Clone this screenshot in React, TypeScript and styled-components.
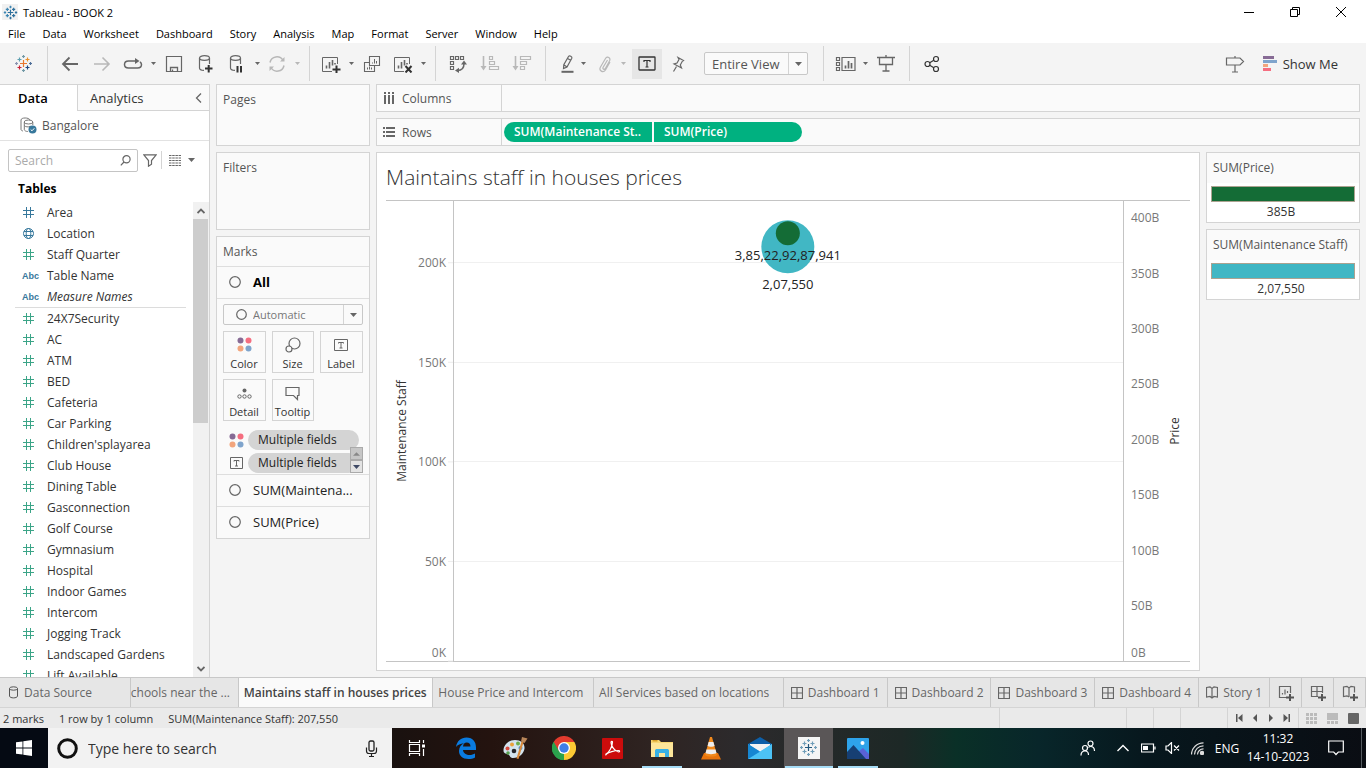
import React from "react";
import styled, { createGlobalStyle, css } from "styled-components";

const c = {
  chrome: "#f4f4f4",
  card: "#fafafa",
  line: "#d4d4d4",
  text: "#333333",
  soft: "#555555",
  icon: "#666666",
  dim: "#b8b8b8",
  dimension: "#37789c",
  measure: "#3ba487",
  pill: "#00b180",
  teal: "#41b7c4",
  green: "#146c36",
};

const GlobalStyle = createGlobalStyle`
  * { box-sizing: border-box; }
  html, body { margin: 0; height: 100%; }
  body, button, input, select {
    font-family: "Open Sans", "Liberation Sans", sans-serif;
    font-size: 12px;
    color: ${c.text};
  }
  button { background: none; border: 0; padding: 0; }
  ul { list-style: none; margin: 0; padding: 0; }
  h1, h2, h3, p { margin: 0; font-size: 12px; font-weight: 400; }
  svg { display: block; flex: none; }
`;

const Page = styled.div`
  display: flex;
  flex-direction: column;
  height: 100vh;
  overflow: hidden;
  background: ${c.chrome};
  white-space: nowrap;
`;

/* ---------- window chrome ---------- */

const TitleBar = styled.header`
  display: flex;
  align-items: center;
  flex: none;
  height: 24px;
  padding: 0 2px;
  background: #fff;
  h1 { flex: 1; padding-left: 5px; font-size: 11px; color: #000; }
`;

const AppBadge = styled.span`
  display: grid;
  place-items: center;
  width: 16px;
  height: 16px;
  background: #f1f1f1;
`;

const WindowButton = styled.button`
  display: grid;
  place-items: center;
  width: 46px;
  height: 22px;
`;

const MenuBar = styled.nav`
  display: flex;
  align-items: center;
  flex: none;
  height: 19px;
  background: #fff;
  button { padding: 0 9px 0 8px; font-size: 11px; color: #000; }
`;

const Toolbar = styled.div`
  display: flex;
  align-items: center;
  flex: none;
  height: 41px;
`;

const ToolGroup = styled.div`
  display: flex;
  align-items: center;
  height: 35px;
  padding: 0 7px 0 6px;
  border-left: 1px solid ${c.line};
`;

const FormatGroup = styled(ToolGroup)`
  gap: 4px;
  padding: 0 15px 0 10px;
`;

const Tool = styled.button<{ $w?: number; $on?: boolean }>`
  display: grid;
  place-items: center;
  width: ${(p) => p.$w ?? 32}px;
  height: 30px;
  background: ${(p) => (p.$on ? "#e6e6e6" : "transparent")};
`;

const Split = styled.div`
  display: flex;
  align-items: center;
`;

const Spacer = styled.div`
  flex: 1;
`;

const SelectBox = styled.div<{ $h: number; $w?: number; $icon?: boolean }>`
  display: grid;
  grid-template-columns: 1fr 19px;
  align-items: center;
  height: ${(p) => p.$h}px;
  width: ${(p) => (p.$w ? `${p.$w}px` : "auto")};
  border: 1px solid #c8c8c8;
  border-radius: 2px;
  background: ${c.card};
  select {
    grid-area: 1 / 1 / 2 / 3;
    width: 100%;
    height: 100%;
    appearance: none;
    border: 0;
    background: transparent;
    padding: 0 20px 0 ${(p) => (p.$icon ? 29 : 7)}px;
    color: ${(p) => (p.$icon ? "#777" : c.soft)};
    font-size: ${(p) => (p.$icon ? 11 : 13)}px;
  }
  > span {
    grid-area: 1 / 2;
    display: grid;
    place-items: center;
    height: 100%;
    border-left: 1px solid ${c.line};
    pointer-events: none;
  }
  > svg { grid-area: 1 / 1; margin-left: 12px; pointer-events: none; }
`;

const ViewSelect = styled(SelectBox)`
  margin-left: 10px;
`;

const ShowMe = styled.button`
  display: flex;
  align-items: center;
  gap: 6px;
  margin: 0 28px 0 12px;
  font-size: 13px;
`;

/* ---------- body ---------- */

const Body = styled.main`
  display: flex;
  flex: 1;
  min-height: 0;
`;

const DataPane = styled.aside`
  display: flex;
  flex-direction: column;
  flex: none;
  width: 210px;
  background: #fff;
  border-top: 1px solid ${c.line};
  border-right: 1px solid ${c.line};
`;

const PaneTabs = styled.div`
  display: flex;
  height: 26px;
`;

const PaneTab = styled.button<{ $active?: boolean }>`
  text-align: left;
  font-size: 13px;
  ${(p) =>
    p.$active
      ? css`
          width: 77px;
          padding-left: 18px;
          font-weight: 600;
          color: #000;
        `
      : css`
          flex: 1;
          padding-left: 12px;
          background: ${c.card};
          border-left: 1px solid ${c.line};
          border-bottom: 1px solid ${c.line};
        `}
`;

const Collapse = styled.button`
  display: grid;
  place-items: center;
  width: 22px;
  background: ${c.card};
  border-bottom: 1px solid ${c.line};
`;

const SourceRow = styled.div`
  display: flex;
  align-items: center;
  gap: 5px;
  height: 30px;
  padding-left: 20px;
  border-bottom: 1px solid #e2e2e2;
  color: ${c.soft};
`;

const SearchRow = styled.div`
  display: flex;
  align-items: center;
  height: 38px;
  padding-left: 8px;
`;

const SearchField = styled.label`
  display: flex;
  align-items: center;
  width: 130px;
  height: 23px;
  padding: 0 6px;
  border: 1px solid #c4c4c4;
  border-radius: 2px;
  input {
    flex: 1;
    min-width: 0;
    padding: 0;
    border: 0;
    outline: 0;
    background: none;
  }
  input::placeholder { color: #aaa; opacity: 1; }
`;

const SearchTool = styled.button`
  display: grid;
  place-items: center;
  width: 23px;
  height: 18px;
  & + & { border-left: 1px solid ${c.line}; width: 27px; }
`;

const TablesHeading = styled.h2`
  height: 23px;
  padding: 1px 0 0 18px;
  font-weight: 700;
  color: #000;
`;

const FieldArea = styled.div`
  display: flex;
  flex: 1;
  min-height: 0;
  overflow: hidden;
`;

const Fields = styled.div`
  flex: 1;
  overflow: hidden;
`;

const FieldList = styled.ul`
  & + & {
    margin: 0 7px 0 15px;
    border-top: 1px solid #dcdcdc;
  }
  & + & > li { padding-left: 7px; }
`;

const Field = styled.li<{ $italic?: boolean }>`
  display: flex;
  align-items: center;
  height: 21px;
  padding-left: 22px;
  gap: 12px;
  font-style: ${(p) => (p.$italic ? "italic" : "normal")};
`;

const FieldKind = styled.span<{ $measure?: boolean }>`
  display: grid;
  place-items: center;
  flex: none;
  width: 13px;
  font: 700 9px "Liberation Sans", sans-serif;
  color: ${(p) => (p.$measure ? c.measure : c.dimension)};
`;

const ScrollTrack = styled.div`
  display: flex;
  flex-direction: column;
  width: 16px;
  background: #f1f1f1;
  button { display: grid; place-items: center; height: 17px; }
`;

const ScrollThumb = styled.div`
  height: 43%;
  margin-right: 1px;
  background: #cdcdcd;
`;

const Cards = styled.aside`
  display: flex;
  flex-direction: column;
  flex: none;
  gap: 6px;
  width: 154px;
  margin-left: 6px;
`;

const Card = styled.section<{ $h?: number }>`
  flex: none;
  height: ${(p) => (p.$h ? `${p.$h}px` : "auto")};
  background: ${c.card};
  border: 1px solid ${c.line};
`;

const CardTitle = styled.h3`
  height: 30px;
  padding-left: 6px;
  line-height: 30px;
  color: ${c.soft};
`;

const MarksTitle = styled(CardTitle)`
  height: 29px;
`;

const MarkRow = styled.button<{ $strong?: boolean }>`
  display: flex;
  align-items: center;
  gap: 12px;
  width: 100%;
  height: 32px;
  padding: 0 0 2px 12px;
  border-top: 1px solid #dedede;
  font-size: 13px;
  font-weight: ${(p) => (p.$strong ? 700 : 400)};
  color: ${(p) => (p.$strong ? "#000" : "#222")};
`;

const MarkBody = styled.div`
  padding: 5px 6px 0;
  border-top: 1px solid #dedede;
`;

const MarkButtons = styled.div`
  display: grid;
  grid-template-columns: 43px 42px 43px;
  gap: 6px;
  margin-top: 6px;
`;

const MarkButton = styled.button`
  display: flex;
  flex-direction: column;
  align-items: center;
  justify-content: space-between;
  height: 42px;
  padding: 5px 1px 1px 0;
  border: 1px solid ${c.line};
  font-size: 11px;
`;

const MarkFields = styled.div`
  position: relative;
  display: grid;
  gap: 3px;
  padding: 9px 0 1px;
`;

const MarkField = styled.div`
  display: flex;
  align-items: center;
  height: 20px;
  padding-left: 6px;
  gap: 4px;
  button {
    width: 111px;
    height: 20px;
    padding: 0 0 1px 10px;
    border-radius: 10px;
    background: #d4d4d4;
    text-align: left;
    color: #222;
    font-weight: 500;
  }
`;

const Stepper = styled.div`
  position: absolute;
  right: 0;
  bottom: 1px;
  button {
    display: grid;
    place-items: center;
    width: 13px;
    height: 13px;
    border: 1px solid #aaa;
    background: #e3e3e3;
  }
  button:first-child { background: #c6c6c6; }
`;

const Sheet = styled.div`
  display: flex;
  flex-direction: column;
  flex: 1;
  min-width: 0;
  gap: 6px;
  padding: 0 6px 6px;
`;

const Shelf = styled.div`
  display: flex;
  align-items: center;
  flex: none;
  height: 28px;
  background: ${c.card};
  border: 1px solid ${c.line};
`;

const ShelfName = styled.div`
  display: flex;
  align-items: center;
  gap: 7px;
  width: 125px;
  height: 100%;
  padding-left: 6px;
  border-right: 1px solid ${c.line};
  color: ${c.soft};
`;

const Pills = styled.div`
  display: flex;
  gap: 2px;
  padding-left: 2px;
  button {
    width: 148px;
    height: 20px;
    padding: 0 0 1px 10px;
    text-align: left;
    background: ${c.pill};
    color: #fff;
    font-weight: 600;
  }
  button:first-child { border-radius: 10px 0 0 10px; }
  button:last-child { border-radius: 0 10px 10px 0; }
`;

const SheetBody = styled.div`
  display: flex;
  flex: 1;
  min-height: 0;
  gap: 6px;
`;

const View = styled.section`
  display: flex;
  flex-direction: column;
  flex: 1;
  padding: 0 9px 8px;
  background: #fff;
  border: 1px solid ${c.line};
  h2 {
    height: 47px;
    line-height: 49px;
    font-size: 21px;
    font-weight: 300;
    color: #333;
  }
`;

const Chart = styled.div`
  display: grid;
  grid-template-columns: 67px 1fr 66px;
  flex: 1;
  min-height: 0;
  border-top: 1px solid #c4c4c4;
  border-bottom: 1px solid #c4c4c4;
  svg { width: 100%; height: 100%; overflow: visible; }
  text { font-size: 12px; fill: #787878; dominant-baseline: central; }
  .axis { font-size: 12px; font-weight: 500; fill: #333; text-anchor: middle; }
  .mark { font-size: 13px; fill: #222; text-anchor: middle; }
`;

const Plot = styled.div`
  border-left: 1px solid #c4c4c4;
  border-right: 1px solid #c4c4c4;
`;

const Legends = styled.aside`
  display: flex;
  flex-direction: column;
  gap: 6px;
  width: 154px;
`;

const Ramp = styled.div<{ $fill: string }>`
  height: 16px;
  border: 1px solid #aca391;
  background: ${(p) => p.$fill};
`;

const LegendBody = styled.div`
  padding: 3px 4px 0;
  height: 39px;
  background: #fff;
  text-align: center;
  p { line-height: 19px; padding-right: 4px; }
`;

/* ---------- sheet tabs and status ---------- */

const SheetTabs = styled.nav`
  display: flex;
  flex: none;
  height: 31px;
  border-top: 1px solid #c8c8c8;
  border-bottom: 1px solid ${c.line};
  background: #e6e6e6;
`;

const SheetTab = styled.button<{ $w: number; $active?: boolean; $cut?: boolean; $icon?: boolean }>`
  display: flex;
  align-items: center;
  gap: ${(p) => (p.$icon ? 5 : 3)}px;
  flex: ${(p) => p.$w} 1 ${(p) => p.$w}px;
  min-width: 0;
  overflow: hidden;
  padding-left: ${(p) => (p.$cut ? 0 : p.$icon ? 7 : 5)}px;
  border-right: 1px solid #c8c8c8;
  background: ${(p) => (p.$active ? c.card : "transparent")};
  color: ${(p) => (p.$active ? "#444" : "#666")};
  font-weight: ${(p) => (p.$active ? 600 : 400)};
`;

const NewTab = styled.button`
  display: grid;
  place-items: center;
  flex: none;
  width: 32px;
  border-right: 1px solid #c8c8c8;
`;

const StatusBar = styled.footer`
  display: flex;
  align-items: center;
  flex: none;
  height: 20px;
  padding-left: 3px;
  background: #eaeaea;
  p { font-size: 11px; margin-right: 15px; }
`;

const StatusCell = styled.div<{ $w: number; $gap?: number }>`
  display: flex;
  align-items: center;
  justify-content: center;
  gap: ${(p) => p.$gap ?? 0}px;
  width: ${(p) => p.$w}px;
  height: 20px;
  border-left: 1px solid ${c.line};
`;

/* ---------- taskbar ---------- */

const Taskbar = styled.div`
  display: flex;
  flex: none;
  height: 40px;
  color: #fff;
  background: linear-gradient(90deg, #18110f 28%, #24130f 36%, #2f2422 48%, #2c2a2c 54%, #1d2826 66%, #0a3027 70%, #08262a 76%, #07171d 84%, #0a0d13 100%);
`;

const Start = styled.button`
  display: grid;
  place-items: center;
  width: 48px;
  background: #050a13;
`;

const TaskSearch = styled.label`
  display: flex;
  align-items: center;
  gap: 10px;
  width: 344px;
  padding: 0 12px 0 9px;
  background: #f2f2f2;
  input {
    flex: 1;
    border: 0;
    outline: 0;
    padding: 0;
    background: none;
    font-size: 14px;
  }
  input::placeholder { color: #333; opacity: 1; }
`;

const TaskApp = styled.button<{ $open?: boolean; $active?: boolean }>`
  display: grid;
  place-items: center;
  width: 49px;
  background: ${(p) =>
    p.$open || p.$active
      ? `linear-gradient(#a6dcf6, #a6dcf6) center bottom / ${p.$active ? 48 : 40}px 2px no-repeat${p.$active ? ", #5a5657" : ""}`
      : "none"};
`;

const Tray = styled.div`
  display: flex;
  align-items: center;
  button { display: grid; place-items: center; height: 40px; color: #fff; }
`;

const TrayButton = styled.button<{ $w: number }>`
  width: ${(p) => p.$w}px;
`;

const Clock = styled.div`
  width: 70px;
  line-height: 18px;
  text-align: center;
  font-size: 12px;
`;

const DesktopEdge = styled.div`
  width: 5px;
  height: 40px;
  border-left: 1px solid #555b60;
`;

/* ---------- icons ---------- */

type IcoProps = { w?: number; h?: number; color?: string; sw?: number; children: React.ReactNode };

const Ico = ({ w = 18, h = w, color = c.icon, sw = 1, children }: IcoProps) => (
  <svg width={w} height={h} viewBox={`0 0 ${w} ${h}`} fill="none" stroke={color} strokeWidth={sw} aria-hidden="true">
    {children}
  </svg>
);

const Caret = ({ color = c.icon, big = false }: { color?: string; big?: boolean }) => (
  <svg width={big ? 7 : 5} height={big ? 4 : 3} viewBox="0 0 8 4" preserveAspectRatio="none" aria-hidden="true">
    <path d="M0 0h8L4 4z" fill={color} />
  </svg>
);

/* centre x, centre y and arm length of each plus in the Tableau mark */
const pluses: [number, number, number][] = [
  [9.5, 9.5, 3.5],
  [5.5, 5.5, 2],
  [13.5, 5.5, 2],
  [5.5, 13.5, 2],
  [13.5, 13.5, 2],
  [9.5, 2.5, 1.5],
  [9.5, 16.5, 1.5],
  [2.5, 9.5, 1.5],
  [16.5, 9.5, 1.5],
];

const TableauMark = ({ size = 19, colors, sw = 1.2 }: { size?: number; colors: string[]; sw?: number }) => (
  <svg width={size} height={size} viewBox="0 0 19 19" fill="none" strokeWidth={sw} aria-hidden="true">
    {pluses.map(([x, y, r], i) => (
      <path key={i} d={`M${x - r} ${y}h${2 * r}M${x} ${y - r}v${2 * r}`} stroke={colors[i % colors.length]} />
    ))}
  </svg>
);

const brand = ["#e8762d", "#5c9fb0", "#eb912c", "#c72035", "#1f457e", "#7199a6", "#7199a6", "#8a93b0", "#4f6f99"];

const Bars = ({ children }: { children?: React.ReactNode }) => (
  <Ico w={20} h={18}>
    <path d="M11 16.5H1.5V2.5H16.5V9" />
    <path d="M5.500 13.500v-3M8.500 13.500V7M11.500 10.500V5M14 9.500V8" strokeWidth={1.600} />
    {children}
  </Ico>
);

const TBox = ({ size, color = c.icon }: { size: number; color?: string }) => (
  <svg width={size + 3} height={size} viewBox="0 0 18 15" fill="none" stroke={color} aria-hidden="true">
    <rect x="1" y="1" width="16" height="13" rx="0.5" strokeWidth="1.300" />
    <path d="M6 6V4.500h6V6M9 4.500v6.500M7.500 11h3" strokeWidth="1.200" />
  </svg>
);

const Hash = ({ color }: { color: string }) => (
  <Ico w={11} h={11} color={color} sw={1}>
    <path d="M3.500 0v11M7.500 0v11M0 3.500h11M0 7.500h11" />
  </Ico>
);

const Globe = () => (
  <Ico w={11} h={11} color={c.dimension}>
    <circle cx="5.500" cy="5.500" r="5" />
    <ellipse cx="5.500" cy="5.500" rx="2.300" ry="5" />
    <path d="M1 3.500h9M1 7.500h9" />
  </Ico>
);

const FourDots = () => (
  <svg width="15" height="15" viewBox="0 0 15 15" aria-hidden="true">
    <circle cx="3.500" cy="3.500" r="3" fill="#876b95" />
    <circle cx="11.500" cy="3.500" r="3" fill="#f56e80" />
    <circle cx="3.500" cy="11.500" r="3" fill="#f2a57d" />
    <circle cx="11.500" cy="11.500" r="3" fill="#7fa4cc" />
  </svg>
);

const Ring = ({ size = 12 }: { size?: number }) => (
  <Ico w={size} h={size}>
    <circle cx={size / 2} cy={size / 2} r={size / 2 - 0.7} strokeWidth={1.200} />
  </Ico>
);

const GridIcon = () => (
  <Ico w={12} h={12}>
    <path d="M0.500 0.500h11v11h-11zM6 0v12M0 6h12" strokeWidth={1.200} />
  </Ico>
);

const BookIcon = () => (
  <Ico w={12} h={13}>
    <path d="M0.500 1.500L4 0.800 6 2.500 8 0.800l3.500 0.700V11L8 10.500 6 12 4 10.500 0.500 11zM6 2.500V12" strokeWidth={1.200} />
  </Ico>
);

/* ---------- data ---------- */

const menus = ["File", "Data", "Worksheet", "Dashboard", "Story", "Analysis", "Map", "Format", "Server", "Window", "Help"];

const dimensions: { name: string; kind: "num" | "geo" | "abc" | "measure"; italic?: boolean }[] = [
  { name: "Area", kind: "num" },
  { name: "Location", kind: "geo" },
  { name: "Staff Quarter", kind: "measure" },
  { name: "Table Name", kind: "abc" },
  { name: "Measure Names", kind: "abc", italic: true },
];

const measures = [
  "24X7Security", "AC", "ATM", "BED", "Cafeteria", "Car Parking", "Children'splayarea", "Club House",
  "Dining Table", "Gasconnection", "Golf Course", "Gymnasium", "Hospital", "Indoor Games", "Intercom",
  "Jogging Track", "Landscaped Gardens", "Lift Available",
];

const STAFF_MAX = 231;
const PRICE_MAX = 415;
const staffTicks = [200, 150, 100, 50, 0];
const priceTicks = [400, 350, 300, 250, 200, 150, 100, 50, 0];
const at = (value: number, max: number) => `${(1 - value / max) * 100}%`;

/* ---------- sections ---------- */

const Drop = ({ color, label }: { color?: string; label: string }) => (
  <Tool $w={10} aria-label={label}>
    <Caret color={color} />
  </Tool>
);

const DataDrum = ({ children }: { children: React.ReactNode }) => (
  <Ico w={20} h={20}>
    <ellipse cx="8.500" cy="4" rx="5" ry="2.300" strokeWidth={1.200} />
    <path d="M3.500 4v10c0 1.300 2 2.300 4.500 2.400M13.500 4v6" strokeWidth={1.200} />
    {children}
  </Ico>
);

const MainToolbar = () => (
  <Toolbar>
    <Tool $w={47} aria-label="Start page"><TableauMark colors={brand} /></Tool>
    <ToolGroup>
      <Tool aria-label="Undo">
        <Ico w={18} sw={1.8}><path d="M17 9H2M8.500 2.500L2 9l6.500 6.500" /></Ico>
      </Tool>
      <Tool aria-label="Redo">
        <Ico w={18} sw={1.6} color={c.dim}><path d="M1 9h15M9.500 2.500L16 9l-6.500 6.500" /></Ico>
      </Tool>
      <Split>
        <Tool $w={30} aria-label="Replay">
          <Ico w={20} h={12}>
            <path d="M13 3H5.500C3 3 1.500 4.500 1.500 6.500S3 10 5.500 10h9c2.500 0 4-1.500 4-3.500 0-1-.5-2-1.500-2.700" strokeWidth={1.500} />
            <path d="M12 0l4.500 3L12 6z" fill={c.icon} stroke="none" />
          </Ico>
        </Tool>
        <Drop label="Replay options" />
      </Split>
      <Tool aria-label="Save">
        <Ico w={18}>
          <path d="M1.500 1.500h15v15h-15z" strokeWidth={1.200} />
          <path d="M5.500 16.500v-4h7v4M7.500 16v-1.500" strokeWidth={1.300} />
        </Ico>
      </Tool>
      <Tool aria-label="New data source">
        <DataDrum><path d="M9 14.500h7.500M12.700 11v7.500" stroke="#333" strokeWidth={2} /></DataDrum>
      </Tool>
      <Split>
        <Tool $w={30} aria-label="Pause auto updates">
          <DataDrum><path d="M10.500 12v6.500M14 12v6.500" stroke="#333" strokeWidth={2} /></DataDrum>
        </Tool>
        <Drop label="Update options" />
      </Split>
      <Split>
        <Tool $w={30} aria-label="Run update">
          <Ico w={18} color={c.dim} sw={1.5}>
            <path d="M2 7.500A7 7 0 0 1 15 5.500M16 10.500A7 7 0 0 1 3 12.500" />
            <path d="M16.500 2v4.500H12zM1.500 16v-4.500H6z" fill={c.dim} stroke="none" />
          </Ico>
        </Tool>
        <Drop color={c.dim} label="Run options" />
      </Split>
    </ToolGroup>
    <ToolGroup>
      <Split>
        <Tool $w={30} aria-label="New worksheet">
          <Bars><path d="M11.500 14.500h8M15.500 10.500v7.500" stroke="#333" strokeWidth={2} /></Bars>
        </Tool>
        <Drop label="New sheet options" />
      </Split>
      <Tool aria-label="Duplicate">
        <Ico w={18}>
          <path d="M6.500 1.500h10v9h-10zM6 7.500H1.500v9h10v-5.500" strokeWidth={1.100} />
          <path d="M9.500 8.500v-1M11.500 8.500V4M13.500 8.500V6M4.500 14.500v-2M6.500 14.500v-3M8.500 14.500v-2" />
        </Ico>
      </Tool>
      <Split>
        <Tool $w={30} aria-label="Clear sheet">
          <Bars><path d="M12.500 11l6 6.500M18.500 11l-6 6.500" stroke="#333" strokeWidth={2} /></Bars>
        </Tool>
        <Drop label="Clear options" />
      </Split>
    </ToolGroup>
    <ToolGroup>
      <Tool aria-label="Swap rows and columns">
        <Ico w={18}>
          <path d="M1.500 1.500h3v3h-3zM6.500 1.500h3v3h-3zM11.500 1.500h3v3h-3zM1.500 6.500h3v3h-3zM1.500 11.500h3v3h-3z" strokeWidth={1.200} />
          <path d="M8.500 15.500c4 0 6.500-2.500 6.500-7" strokeWidth={1.500} />
          <path d="M15 5.500l3 4h-6zM6 15.500l4-2.700v5.200z" fill={c.icon} stroke="none" />
        </Ico>
      </Tool>
      <Tool aria-label="Sort ascending">
        <Ico w={20} color={c.dim}>
          <path d="M3.500 2v12" strokeWidth={1.600} /><path d="M0.500 12h6L3.500 16.500z" fill={c.dim} stroke="none" />
          <path d="M9.500 2.500h3v3h-3zM9.500 7.500h5v3h-5zM9.500 12.500h9v3h-9z" strokeWidth={1.200} />
        </Ico>
      </Tool>
      <Tool aria-label="Sort descending">
        <Ico w={20} color={c.dim}>
          <path d="M3.500 2v12" strokeWidth={1.600} /><path d="M0.500 12h6L3.500 16.500z" fill={c.dim} stroke="none" />
          <path d="M8.500 2.500h10v3h-10zM8.500 7.500h6v3h-6zM8.500 12.500h4v3h-4z" strokeWidth={1.200} />
        </Ico>
      </Tool>
    </ToolGroup>
    <FormatGroup>
      <Split>
        <Tool $w={22} aria-label="Highlight">
          <Ico w={16} h={20}>
            <path d="M9.500 2.500c1-1.300 4 .2 3.300 1.800L8 13l-3.500 1.500.3-3.700zM8.500 4.500l3.200 1.700M4.800 10.800L8 13" strokeWidth={1.200} />
            <path d="M2.500 17.800h12" strokeWidth={2} />
          </Ico>
        </Tool>
        <Drop label="Highlight options" />
      </Split>
      <Split>
        <Tool $w={26} aria-label="Group">
          <Ico w={14} h={18} color={c.dim} sw={1.2}>
            <path d="M9.500 5L5 12.500c-.6 1.500 1.300 2.500 2.200 1.200L11.500 6C13 3 9.500.5 7.500 3.500l-5 8.500c-2 3.500 2.500 6.500 5 3l4.500-8" />
          </Ico>
        </Tool>
        <Drop color={c.dim} label="Group options" />
      </Split>
      <Tool $w={30} $on aria-label="Show mark labels"><TBox size={15} color="#333" /></Tool>
      <Tool $w={24} aria-label="Fix axes">
        <Ico w={16} h={18} sw={1.2}>
          <path d="M8 2.500l5.500 3-1.200.8-2 3.700 1.200 3-7.500-4 3-1L9 4.500zM6.500 11.500l-3 5" />
        </Ico>
      </Tool>
      <ViewSelect $h={23} $w={104}>
        <select aria-label="Fit" defaultValue="Entire View">
          <option>Entire View</option>
          <option>Standard</option>
        </select>
        <span><Caret big /></span>
      </ViewSelect>
    </FormatGroup>
    <ToolGroup>
      <Split>
        <Tool $w={30} aria-label="Show cards">
          <Ico w={21} h={16}>
            <path d="M1.500 1.500h3v3h-3zM1.500 6.500h3v3h-3zM1.500 11.500h3v3h-3zM7 1.500h13v13H7z" strokeWidth={1.200} />
            <path d="M10.500 12.500v-3M13.500 12.500V5M16.500 12.500V7" strokeWidth={1.700} />
          </Ico>
        </Tool>
        <Drop label="Card options" />
      </Split>
      <Tool aria-label="Presentation mode">
        <Ico w={18}>
          <path d="M0 2.500h18M2.500 2.500v7h13v-7M9 0v2M9 9.500V16M5.500 16h7" strokeWidth={1.300} />
        </Ico>
      </Tool>
    </ToolGroup>
    <ToolGroup>
      <Tool aria-label="Share">
        <Ico w={16} h={18} color="#333" sw={1.2}>
          <circle cx="3.500" cy="9" r="2.500" /><circle cx="12" cy="4" r="2.500" /><circle cx="12" cy="14" r="2.500" />
          <path d="M5.700 7.700L9.800 5.300M5.700 10.300l4.100 2.400" />
        </Ico>
      </Tool>
    </ToolGroup>
    <Spacer />
    <Tool aria-label="Guide">
      <Ico w={20} h={18}>
        <path d="M1.500 3h13.500l3.500 3.500L15 10H1.500zM10 1v2M10 10v7M7 17h6" strokeWidth={1.200} />
      </Ico>
    </Tool>
    <ShowMe>
      <svg width="14" height="16" viewBox="0 0 14 16" aria-hidden="true">
        <path d="M0 0h11v3H0z" fill="#876b95" /><path d="M0 4h14v3H0z" fill="#7fa4cc" />
        <path d="M0 8h5v3H0z" fill="#f2a57d" /><path d="M0 12h8v3H0z" fill="#f56e80" />
      </svg>
      Show Me
    </ShowMe>
  </Toolbar>
);

const DataPanel = () => (
  <DataPane>
    <PaneTabs>
      <PaneTab $active>Data</PaneTab>
      <PaneTab>Analytics</PaneTab>
      <Collapse aria-label="Collapse pane">
        <Ico w={7} h={10} sw={1.3}><path d="M6 0.500L1.500 5 6 9.500" /></Ico>
      </Collapse>
    </PaneTabs>
    <SourceRow>
      <svg width="17" height="17" viewBox="0 0 17 17" fill="none" stroke="#777" aria-hidden="true">
        <path d="M1 3v9.500c0 .8 1 1.300 2 1.500M1 3c0-2.700 8-2.700 9 0" />
        <ellipse cx="8.500" cy="5" rx="4.300" ry="2" />
        <path d="M4.300 5v7.500c0 1 1.500 2 3.500 2M12.800 5v3M4.300 8.500c1 1.500 4 1.800 6 .8" />
        <circle cx="12.500" cy="12.500" r="4" fill="#37789c" stroke="none" />
        <path d="M10.700 12.500l1.300 1.300 2.300-2.500" stroke="#fff" />
      </svg>
      Bangalore
    </SourceRow>
    <SearchRow>
      <SearchField>
        <input placeholder="Search" aria-label="Search fields" />
        <Ico w={11} h={11}><circle cx="6.500" cy="4.300" r="3.600" strokeWidth={1.200} /><path d="M4 7L0.800 10.300" strokeWidth={1.200} /></Ico>
      </SearchField>
      <SearchTool aria-label="Filter fields">
        <Ico w={14} h={13}><path d="M0.800 0.800h12.400L8.500 6.500v3.700l-3 2V6.500z" strokeWidth={1.200} /></Ico>
      </SearchTool>
      <SearchTool aria-label="List view">
        <Ico w={13} h={11}>
          <path d="M0 .5h12M0 3h12M0 5.500h12M0 8h12M0 10.500h12" strokeDasharray="2.500 0.700" strokeWidth={1.100} />
        </Ico>
      </SearchTool>
      <Caret big />
    </SearchRow>
    <TablesHeading>Tables</TablesHeading>
    <FieldArea>
      <Fields>
        <FieldList>
          {dimensions.map((f) => (
            <Field key={f.name} $italic={f.italic}>
              <FieldKind $measure={f.kind === "measure"}>
                {f.kind === "abc" ? "Abc" : f.kind === "geo" ? <Globe /> : <Hash color={f.kind === "measure" ? c.measure : c.dimension} />}
              </FieldKind>
              {f.name}
            </Field>
          ))}
        </FieldList>
        <FieldList>
          {measures.map((m) => (
            <Field key={m}>
              <FieldKind $measure><Hash color={c.measure} /></FieldKind>
              {m}
            </Field>
          ))}
        </FieldList>
      </Fields>
      <ScrollTrack>
        <button aria-label="Scroll up"><Ico w={8} h={6} sw={1.8}><path d="M0.500 5L4 1.500 7.500 5" /></Ico></button>
        <ScrollThumb />
        <Spacer />
        <button aria-label="Scroll down"><Ico w={8} h={6} sw={1.8}><path d="M0.500 1L4 4.500 7.500 1" /></Ico></button>
      </ScrollTrack>
    </FieldArea>
  </DataPane>
);

const MarksCard = () => (
  <Card>
    <MarksTitle>Marks</MarksTitle>
    <MarkRow $strong><Ring />All</MarkRow>
    <MarkBody>
      <SelectBox $h={21} $icon>
        <Ring size={11} />
        <select aria-label="Mark type" defaultValue="Automatic">
          <option>Automatic</option>
          <option>Circle</option>
        </select>
        <span><Caret big /></span>
      </SelectBox>
      <MarkButtons>
        <MarkButton><FourDots />Color</MarkButton>
        <MarkButton>
          <Ico w={16} h={16}><circle cx="9.500" cy="6.500" r="5.500" strokeWidth={1.200} /><circle cx="4" cy="12" r="3" strokeWidth={1.200} fill={c.card} /></Ico>
          Size
        </MarkButton>
        <MarkButton>
          <Ico w={14} h={15}><path d="M.5 2.500h13v11H.5zM4.500 6.500V5.500h5v1M7 5.500v5.500M5.500 11h3" /></Ico>
          Label
        </MarkButton>
        <MarkButton>
          <Ico w={15} h={16}>
            <circle cx="7.500" cy="5.500" r="2" fill={c.icon} stroke="none" />
            <circle cx="2.500" cy="11.500" r="1.700" /><circle cx="7.500" cy="11.500" r="1.700" /><circle cx="12.500" cy="11.500" r="1.700" />
          </Ico>
          Detail
        </MarkButton>
        <MarkButton>
          <Ico w={15} h={16}><path d="M1 2.500h13v8h-1.500v4L8.500 10.500H1z" strokeWidth={1.200} /></Ico>
          Tooltip
        </MarkButton>
      </MarkButtons>
      <MarkFields>
        <MarkField><FourDots /><button>Multiple fields</button></MarkField>
        <MarkField>
          <Ico w={15} h={13}><path d="M1.500 .5h12v11h-12zM5 4.500V3.500h5v1M7.500 3.500v5.500M6 9h3" /></Ico>
          <button>Multiple fields</button>
        </MarkField>
        <Stepper>
          <button aria-label="Previous fields"><svg width="7" height="4" viewBox="0 0 8 4" aria-hidden="true"><path d="M0 4h8L4 0z" fill="#888" /></svg></button>
          <button aria-label="Next fields"><Caret big color="#3f4a66" /></button>
        </Stepper>
      </MarkFields>
    </MarkBody>
    <MarkRow><Ring />SUM(Maintena...</MarkRow>
    <MarkRow><Ring />SUM(Price)</MarkRow>
  </Card>
);

const AxisTitle = ({ x, children }: { x: string; children: string }) => (
  <svg x={x} y="50%" width="1" height="1">
    <text className="axis" transform="rotate(-90)">{children}</text>
  </svg>
);

const MarkChart = () => (
  <Chart>
    <div>
      <svg>
        <AxisTitle x="15">Maintenance Staff</AxisTitle>
        {staffTicks.map((t) => (
          <g key={t}>
            <text x="60" y={at(t || 4.500, STAFF_MAX)} textAnchor="end">{t}K</text>
            <line x1="62" x2="67" y1={at(t, STAFF_MAX)} y2={at(t, STAFF_MAX)} stroke="#ececec" />
          </g>
        ))}
      </svg>
    </div>
    <Plot>
      <svg>
        {staffTicks.slice(0, 4).map((t) => (
          <line key={t} x1="0" x2="100%" y1={at(t, STAFF_MAX)} y2={at(t, STAFF_MAX)} stroke="#f0f0f0" shapeRendering="crispEdges" />
        ))}
        <circle cx="49.9%" cy={at(208, STAFF_MAX)} r="26.500" fill={c.teal} />
        <circle cx="49.9%" cy={at(386, PRICE_MAX)} r="12" fill={c.green} />
        <text className="mark" x="49.9%" y={at(204, STAFF_MAX)}>3,85,22,92,87,941</text>
        <text className="mark" x="49.9%" y={at(189.500, STAFF_MAX)}>2,07,550</text>
      </svg>
    </Plot>
    <div>
      <svg>
        {priceTicks.map((t) => (
          <text key={t} x="7" y={at(t || 8, PRICE_MAX)}>{t}B</text>
        ))}
        <AxisTitle x="50">Price</AxisTitle>
      </svg>
    </div>
  </Chart>
);

const Legend = ({ title, fill, value }: { title: string; fill: string; value: string }) => (
  <Card>
    <CardTitle>{title}</CardTitle>
    <LegendBody>
      <Ramp $fill={fill} />
      <p>{value}</p>
    </LegendBody>
  </Card>
);

const Play = ({ d, label }: { d: string; label: string }) => (
  <button aria-label={label}>
    <svg width="8" height="8" viewBox="0 0 8 8" aria-hidden="true"><path d={d} fill="#555" /></svg>
  </button>
);

const SheetNav = () => (
  <SheetTabs>
    <SheetTab $w={131}>
      <svg width="16" height="13" viewBox="0 0 16 13" fill="none" stroke="#555" aria-hidden="true">
        <ellipse cx="8.500" cy="2.500" rx="4" ry="1.700" /><path d="M4.500 2.500v7.500c0 2.500 8 2.500 8 0V2.500" />
      </svg>
      <span>Data Source</span>
    </SheetTab>
    <SheetTab $w={108} $cut>chools near the ...</SheetTab>
    <SheetTab $w={195} $active>Maintains staff in houses prices</SheetTab>
    <SheetTab $w={161}>House Price and Intercom</SheetTab>
    <SheetTab $w={190}>All Services based on locations</SheetTab>
    {[1, 2, 3, 4].map((n) => (
      <SheetTab key={n} $w={104} $icon><GridIcon />Dashboard {n}</SheetTab>
    ))}
    <SheetTab $w={71} $icon><BookIcon />Story 1</SheetTab>
    <NewTab aria-label="New worksheet">
      <Ico w={16}><path d="M8 12.500H1.500V1.500h11V8M4.500 9.500V8M7 9.500V4.500M9.500 8V6" strokeWidth={1.200} /><path d="M8 12.500h8M12 9v7" stroke="#555" strokeWidth={2} /></Ico>
    </NewTab>
    <NewTab aria-label="New dashboard">
      <Ico w={16}><path d="M8 11.500H1.500V1.500h11V8M7 1.500v10M1.500 6.500h11" strokeWidth={1.200} /><path d="M8 12.500h8M12 9v7" stroke="#555" strokeWidth={2} /></Ico>
    </NewTab>
    <NewTab aria-label="New story">
      <Ico w={16}><path d="M7 12L5 10.800 1.500 11.500V2L5 1.300 7 3l2-1.700 3.500.7v5.500M7 3v9" strokeWidth={1.200} /><path d="M8 12.500h8M12 9v7" stroke="#555" strokeWidth={2} /></Ico>
    </NewTab>
  </SheetTabs>
);

const Status = () => (
  <StatusBar>
    <p>2 marks</p>
    <p>1 row by 1 column</p>
    <p>SUM(Maintenance Staff): 207,550</p>
    <Spacer />
    <StatusCell $w={127} />
    <StatusCell $w={27} />
    <StatusCell $w={27} />
    <StatusCell $w={47} />
    <StatusCell $w={71} $gap={8}>
      <Play label="First sheet" d="M1 0h1.500v8H1zM7.500 0v8L3 4z" />
      <Play label="Previous sheet" d="M6 0v8L2 4z" />
      <Play label="Next sheet" d="M2 0v8l4-4z" />
      <Play label="Last sheet" d="M.5 0v8L5 4zM5.500 0H7v8H5.500z" />
    </StatusCell>
    <StatusCell $w={68} $gap={10}>
      <button aria-label="Sheet sorter">
        <svg width="11" height="11" viewBox="0 0 11 11" aria-hidden="true">
          {[0, 4, 8].map((y) => [0, 4, 8].map((x) => <rect key={`${x}-${y}`} x={x} y={y} width="3" height="3" fill="#bbb" />))}
        </svg>
      </button>
      <button aria-label="Filmstrip">
        <svg width="11" height="11" viewBox="0 0 11 11" fill="#bbb" aria-hidden="true"><path d="M0 0h11v7H0zM0 8h3v3H0zM4 8h3v3H4zM8 8h3v3H8z" /></svg>
      </button>
      <button aria-label="Tabs view">
        <svg width="11" height="11" viewBox="0 0 11 11" aria-hidden="true"><rect width="11" height="11" rx="1" fill="#666" /></svg>
      </button>
    </StatusCell>
  </StatusBar>
);

const WindowsBar = () => (
  <Taskbar>
    <Start aria-label="Start">
      <svg width="16" height="16" viewBox="0 0 16 16" fill="#fff" aria-hidden="true">
        <path d="M0 2.300l6.500-.9v6.200H0zM7.300 1.300L16 0v7.600H7.300zM0 8.400h6.500v6.200L0 13.700zM7.300 8.400H16V16l-8.700-1.300z" />
      </svg>
    </Start>
    <TaskSearch>
      <svg width="21" height="21" viewBox="0 0 21 21" aria-hidden="true"><circle cx="10.500" cy="10.500" r="8.800" fill="none" stroke="#111" strokeWidth="3" /></svg>
      <input placeholder="Type here to search" aria-label="Windows search" />
      <Ico w={16} h={17} color="#222"><rect x="5" y="1" width="5" height="10" rx="1.500" strokeWidth={1.300} /><path d="M2.500 7.500v3.500c0 1.500 1 2.500 2.500 2.500h5c1.500 0 2.500-1 2.500-2.500V7.500M7.500 13.500v3M5 16.500h5" strokeWidth={1.200} /></Ico>
    </TaskSearch>
    <TaskApp aria-label="Task view">
      <Ico w={18} h={16} color="#fff"><path d="M1.500 0v2.500h10V0M1.500 4.500h10v7h-10zM1.500 16v-2.500h10V16M15.500 0v3M15.500 9v7" strokeWidth={1.200} /><path d="M14 4.500h3v3h-3z" fill="#fff" stroke="none" /></Ico>
    </TaskApp>
    <TaskApp aria-label="Edge">
      <svg width="22" height="22" viewBox="0 0 22 22" aria-hidden="true">
        <path fill="#0a7be0" d="M1 10C2 4 6 .5 11.500.5 18 .5 21 5 21 10.500V13H8c.3 3.500 3.500 5 6.500 5 2.200 0 4-.6 5.500-1.500v4c-1.800 1-4 1.500-6.500 1.500C7.500 22 4 18.500 4 14c0-3.500 2-6.300 5-7.700C5.500 6.500 2.500 8 1 10zM8 9.500h7.500c0-2.500-1.500-4-3.700-4S8.300 7 8 9.500z" />
      </svg>
    </TaskApp>
    <TaskApp aria-label="Paint">
      <svg width="26" height="24" viewBox="0 0 26 24" aria-hidden="true">
        <path d="M13 4c6 0 10 3.500 9.500 8.500S17 22 11 22c-3 0-3-2.500-4.500-3.500S1.500 18 1.500 14.500C1.500 9 6.500 4 13 4z" fill="#d3e3ee" />
        <circle cx="10" cy="8.500" r="2" fill="#eaa13b" /><circle cx="5.500" cy="12.500" r="2" fill="#d64a3e" />
        <circle cx="6" cy="17" r="1.800" fill="#57a04e" /><circle cx="16" cy="7.500" r="2" fill="#6cae4e" />
        <circle cx="12" cy="15" r="2.300" fill="#25252b" /><circle cx="18.500" cy="12" r="2" fill="#478fd0" />
        <path d="M14.500 22.500l5-17 2 .7-5 16.800z" fill="#d98a3c" /><path d="M19 5.500L20 1l5.500 1.500L22.500 7z" fill="#b98659" />
      </svg>
    </TaskApp>
    <TaskApp aria-label="Chrome">
      <svg width="24" height="24" viewBox="0 0 24 24" aria-hidden="true">
        <path d="M12 12L1.600 6A12 12 0 0 1 22.400 6z" fill="#e33b2e" />
        <path d="M12 12L22.400 6A12 12 0 0 1 12 24z" fill="#fcc934" />
        <path d="M12 12v12A12 12 0 0 1 1.600 6z" fill="#2ba24c" />
        <path d="M12 6h10.400L17.200 15z" fill="#fcc934" /><path d="M6.800 15L1.600 6 12 6z" fill="#e33b2e" />
        <path d="M1.600 6L6.800 15 12 24A12 12 0 0 1 1.600 6z" fill="#2ba24c" />
        <circle cx="12" cy="12" r="6" fill="#fff" /><circle cx="12" cy="12" r="4.700" fill="#3f7ee8" />
      </svg>
    </TaskApp>
    <TaskApp aria-label="Acrobat">
      <svg width="21" height="21" viewBox="0 0 21 21" aria-hidden="true">
        <rect width="21" height="21" rx="1" fill="#cc0c0c" />
        <path d="M4 16c3-1 6.500-7.500 6.500-12 0-1-1.500-1-1.500.5 0 3.500 4 9 7.500 9.500 1.500 0 1.500-1.500 0-1.500-4 0-10 2-12 3.500-1 1-.8 1.500-.5 0z" fill="none" stroke="#fff" strokeWidth="1.200" />
      </svg>
    </TaskApp>
    <TaskApp aria-label="File Explorer" $open>
      <svg width="22" height="19" viewBox="0 0 22 19" aria-hidden="true">
        <path d="M0 1h8l2 2h12v15H0z" fill="#f7d774" /><path d="M0 4h22v14H0z" fill="#fde69a" />
        <path d="M1.500 1h5v1.500h-5z" fill="#d8a128" />
        <path d="M4 18v-6.500C4 10.500 5 10 6 10h10c1 0 2 .5 2 1.500V18h-4v-4H8v4z" fill="#38b1e6" />
      </svg>
    </TaskApp>
    <TaskApp aria-label="VLC">
      <svg width="20" height="23" viewBox="0 0 20 23" aria-hidden="true">
        <path d="M3 16h14l3 6.500H0z" fill="#e8740c" /><path d="M9 0h2l5 18c-2 2-10 2-12 0z" fill="#f28a1c" />
        <path d="M7.600 5h4.800l1.200 4c-1.500 1-5.500 1-7 0zM5.500 12.500h9l1 3.500c-2 1.500-9 1.500-11 0z" fill="#eee" />
      </svg>
    </TaskApp>
    <TaskApp aria-label="Mail">
      <svg width="24" height="22" viewBox="0 0 24 22" aria-hidden="true">
        <path d="M0 7l12-7 12 7v3H0z" fill="#0d5fa8" /><path d="M2 7h20v8H2z" fill="#f3f3f3" />
        <path d="M0 7l12 8 12-8v15H0z" fill="#27a5e8" /><path d="M0 22l24-15v15z" fill="#4cc2f5" /><path d="M0 7l12 7.500L0 22z" fill="#1686d1" />
      </svg>
    </TaskApp>
    <TaskApp aria-label="Tableau" $active>
      <svg width="22" height="22" viewBox="0 0 22 22" fill="none" aria-hidden="true">
        <rect width="22" height="22" fill="#f5f5f5" />
        {pluses.map(([x, y, r], i) => (
          <path key={i} d={`M${x + 1 - r} ${y + 1}h${2 * r}M${x + 1} ${y + 1 - r}v${2 * r}`} stroke={i ? "#6f9db8" : "#24597f"} strokeWidth="1.200" />
        ))}
      </svg>
    </TaskApp>
    <TaskApp aria-label="Photos" $open>
      <svg width="22" height="21" viewBox="0 0 22 21" aria-hidden="true">
        <rect width="22" height="21" rx="1" fill="#2ea3ea" /><path d="M11 14l5-4 6 6v5H11z" fill="#5a62d6" />
        <path d="M0 14l6.500-7L19 21H0z" fill="#163f73" /><circle cx="15.500" cy="5" r="2" fill="#fff" />
      </svg>
    </TaskApp>
    <Spacer />
    <Tray>
      <TrayButton $w={44} aria-label="People">
        <Ico w={16} h={16} color="#fff" sw={1.2}><circle cx="10.500" cy="3.500" r="2.500" /><circle cx="5" cy="8" r="2.500" /><path d="M1 15.500c0-3 1.500-4.500 4-4.500s3.500 1.500 3.500 4M8.500 7.500c.5-.7 1.200-1 2-1 2.500 0 4 1.500 4 4.500" /></Ico>
      </TrayButton>
      <TrayButton $w={26} aria-label="Hidden icons">
        <Ico w={12} h={8} color="#fff" sw={1.4}><path d="M.5 7L6 1.500 11.500 7" /></Ico>
      </TrayButton>
      <TrayButton $w={24} aria-label="Battery">
        <Ico w={15} h={10} color="#fff"><path d="M.5 1h12v8H.5zM14 3.500v3" strokeWidth={1.200} /><path d="M2 3h5v4H2z" fill="#fff" stroke="none" /></Ico>
      </TrayButton>
      <TrayButton $w={24} aria-label="Muted">
        <Ico w={15} h={12} color="#fff"><path d="M1 4h2l3.500-3.500v11L3 8H1zM9 3.500l5 5M14 3.500l-5 5" strokeWidth={1.200} /></Ico>
      </TrayButton>
      <TrayButton $w={27} aria-label="Wi-Fi">
        <Ico w={13} h={13} color="#ddd" sw={1.2}><path d="M.5 12.500C.5 6 6 .8 12.500.8M3.500 12.500c0-4.800 4-8.700 9-8.700M6.500 12.500c0-3.200 2.800-5.700 6-5.700" /><circle cx="11" cy="11" r="1.600" fill="#ddd" /></Ico>
      </TrayButton>
      <TrayButton $w={32}>ENG</TrayButton>
      <Clock>11:32<br />14-10-2023</Clock>
      <TrayButton $w={45} aria-label="Notifications">
        <Ico w={16} h={16} color="#fff" sw={1.2}><path d="M.7 1h14.600v11h-5L8 14.500 5.700 12h-5z" /></Ico>
      </TrayButton>
      <Tool $w={3} aria-label="Tray end" />
      <DesktopEdge />
    </Tray>
  </Taskbar>
);

export default function App() {
  return (
    <Page>
      <GlobalStyle />
      <TitleBar>
        <AppBadge><TableauMark size={15} sw={1.5} colors={["#2c6f9c", "#3d86b3"]} /></AppBadge>
        <h1>Tableau - BOOK 2</h1>
        <WindowButton aria-label="Minimize"><Ico w={10} h={10} color="#000"><path d="M0 5.500h10" /></Ico></WindowButton>
        <WindowButton aria-label="Restore"><Ico w={10} h={10} color="#000"><path d="M.5 2.500h7v7h-7zM2.500 2.500v-2h7v7h-2" /></Ico></WindowButton>
        <WindowButton aria-label="Close"><Ico w={10} h={10} color="#000"><path d="M0 0l10 10M10 0L0 10" /></Ico></WindowButton>
      </TitleBar>
      <MenuBar>
        {menus.map((m) => <button key={m}>{m}</button>)}
      </MenuBar>
      <MainToolbar />
      <Body>
        <DataPanel />
        <Cards>
          <Card $h={62}><CardTitle>Pages</CardTitle></Card>
          <Card $h={78}><CardTitle>Filters</CardTitle></Card>
          <MarksCard />
        </Cards>
        <Sheet>
          <Shelf>
            <ShelfName>
              <Ico w={12} h={12} sw={2}><path d="M2 0v2M6 0v2M10 0v2M2 3v9M6 3v9M10 3v9" /></Ico>
              Columns
            </ShelfName>
          </Shelf>
          <Shelf>
            <ShelfName>
              <Ico w={12} h={12} sw={2}><path d="M0 2h2M0 6h2M0 10h2M3 2h9M3 6h9M3 10h9" /></Ico>
              Rows
            </ShelfName>
            <Pills>
              <button>SUM(Maintenance St..</button>
              <button>SUM(Price)</button>
            </Pills>
          </Shelf>
          <SheetBody>
            <View>
              <h2>Maintains staff in houses prices</h2>
              <MarkChart />
            </View>
            <Legends>
              <Legend title="SUM(Price)" fill={c.green} value="385B" />
              <Legend title="SUM(Maintenance Staff)" fill={c.teal} value="2,07,550" />
            </Legends>
          </SheetBody>
        </Sheet>
      </Body>
      <SheetNav />
      <Status />
      <WindowsBar />
    </Page>
  );
}
